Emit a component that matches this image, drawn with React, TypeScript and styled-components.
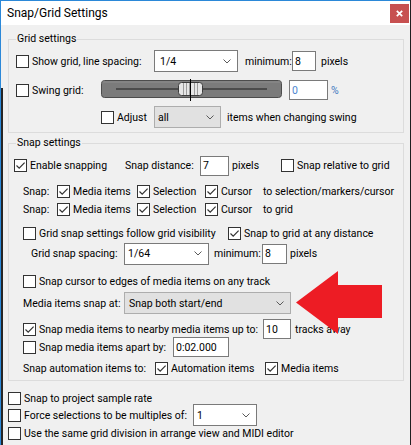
import React from "react";
import styled, { createGlobalStyle } from "styled-components";

const GlobalStyle = createGlobalStyle`
  html, body {
    margin: 0;
    padding: 0;
    background: #1f1f1f;
  }
  body {
    font-family: Roboto, "Liberation Sans", Arial, sans-serif;
    font-size: 10.5px;
    color: #000;
  }
`;

const Window = styled.div`
  position: relative;
  width: 409px;
  height: 444px;
  border-top: 1px solid #2b88d8;
  border-left: 1px solid #2b88d8;
  background: #f0f0f0;
  overflow: hidden;
`;

const EdgeShadow = styled.div`
  position: absolute;
  left: -1px;
  top: 87px;
  bottom: 0;
  width: 3px;
  background: #262626;
`;

const TitleBar = styled.div`
  display: flex;
  align-items: center;
  justify-content: space-between;
  height: 24px;
  padding-left: 6px;
  background: #fff;
  font-size: 12px;
`;

const CloseButton = styled.div`
  display: grid;
  place-items: center;
  width: 19px;
  height: 19px;
  margin-right: 1px;
  background: #c75050;
`;

const Content = styled.div`
  padding-left: 7px;
`;

const Group = styled.div<{ $mt: number; $pt: number; $pb: number }>`
  position: relative;
  box-sizing: border-box;
  width: 396px;
  margin-top: ${(p) => p.$mt}px;
  padding: ${(p) => p.$pt}px 0 ${(p) => p.$pb}px;
  border: 1px solid #dcdcdc;
`;

const Legend = styled.span`
  position: absolute;
  top: -8px;
  left: 7px;
  padding: 0 1px;
  line-height: 14px;
  background: #f0f0f0;
`;

const Row = styled.div<{ $h: number; $mt?: number; $pl?: number }>`
  display: flex;
  align-items: center;
  height: ${(p) => p.$h}px;
  margin-top: ${(p) => p.$mt ?? 0}px;
  padding-left: ${(p) => p.$pl ?? 0}px;
  white-space: nowrap;
`;

const Slot = styled.div<{ $w: number }>`
  display: flex;
  align-items: center;
  flex: none;
  width: ${(p) => p.$w}px;
`;

const Text = styled.span<{ $blue?: boolean }>`
  color: ${(p) => (p.$blue ? "#3f78c0" : "#000")};
`;

const CheckLabel = styled.label`
  display: flex;
  align-items: center;
  gap: 3px;
`;

const Box = styled.span`
  display: grid;
  place-items: center;
  flex: none;
  box-sizing: border-box;
  width: 13px;
  height: 13px;
  border: 1px solid #333;
  background: #fff;
`;

const Combo = styled.div<{ $w: number; $grey?: boolean; $pl?: number }>`
  display: flex;
  align-items: center;
  justify-content: space-between;
  flex: none;
  box-sizing: border-box;
  width: ${(p) => p.$w}px;
  height: 22px;
  padding: 0 6px 0 ${(p) => p.$pl ?? 3}px;
  border: 1px solid ${(p) => (p.$grey ? "#adadad" : "#7a7a7a")};
  background: ${(p) => (p.$grey ? "#e1e1e1" : "#fff")};
`;

const Field = styled.div<{ $w: number; $blue?: boolean }>`
  display: flex;
  align-items: center;
  flex: none;
  box-sizing: border-box;
  width: ${(p) => p.$w}px;
  height: 20px;
  padding-left: 2px;
  border: 1px solid #7a7a7a;
  background: #fff;
  color: ${(p) => (p.$blue ? "#4d86cf" : "#000")};
`;

const ArrowMark = styled.svg`
  position: absolute;
  left: 295px;
  top: 270px;
`;

function Check({ label, checked }: { label: string; checked?: boolean }) {
  return (
    <CheckLabel>
      <Box>
        {checked && (
          <svg width="11" height="11" viewBox="0 0 11 11">
            <polyline points="1.5,5.5 4.2,8.2 9.6,2.6" fill="none" stroke="#333" strokeWidth="1.2" />
          </svg>
        )}
      </Box>
      <Text>{label}</Text>
    </CheckLabel>
  );
}

function Chevron() {
  return (
    <svg width="8" height="5" viewBox="0 0 8 5">
      <polyline points="0.5,0.5 4,4 7.5,0.5" fill="none" stroke="#5a5a5a" strokeWidth="1" />
    </svg>
  );
}

function Select({ value, w, grey, pl }: { value: string; w: number; grey?: boolean; pl?: number }) {
  return (
    <Combo $w={w} $grey={grey} $pl={pl}>
      <Text>{value}</Text>
      <Chevron />
    </Combo>
  );
}

function SwingSlider() {
  const stripes = [4, 7, 10, 15, 18];
  return (
    <svg width="181" height="22" viewBox="0 0 181 22">
      <rect x="0.5" y="1.5" width="180" height="17" rx="3" fill="#7b7b7b" stroke="#4c4c4c" />
      <rect x="1.5" y="2.5" width="178" height="1" fill="#8e8e8e" />
      <line x1="15" y1="10" x2="166" y2="10" stroke="#1c1c1c" strokeWidth="1.2" />
      <rect x="77.5" y="3.5" width="24" height="13" rx="3" fill="#e6e6e6" stroke="#3c3c3c" />
      {stripes.map((s) => (
        <rect key={s} x={78 + s} y="4" width="1" height="12" fill="#9c9c9c" />
      ))}
      <line x1="89.5" y1="0" x2="89.5" y2="22" stroke="#000" strokeWidth="1" />
    </svg>
  );
}

export default function App() {
  return (
    <>
      <GlobalStyle />
      <Window>
        <TitleBar>
          <span>Snap/Grid Settings</span>
          <CloseButton>
            <svg width="7" height="7" viewBox="0 0 7 7">
              <path d="M0.8 0.8 L6.2 6.2 M6.2 0.8 L0.8 6.2" stroke="#fff" strokeWidth="1.7" />
            </svg>
          </CloseButton>
        </TitleBar>

        <Content>
          <Group $mt={14} $pt={10} $pb={4}>
            <Legend>Grid settings</Legend>
            <Row $h={22} $pl={7}>
              <Slot $w={138}>
                <Check label="Show grid, line spacing:" />
              </Slot>
              <Slot $w={91}>
                <Select value="1/4" w={84} pl={5} />
              </Slot>
              <Slot $w={47}>
                <Text>minimum:</Text>
              </Slot>
              <Slot $w={29}>
                <Field $w={24}>8</Field>
              </Slot>
              <Text>pixels</Text>
            </Row>
            <Row $h={22} $mt={7} $pl={7}>
              <Slot $w={85}>
                <Check label="Swing grid:" />
              </Slot>
              <Slot $w={188}>
                <SwingSlider />
              </Slot>
              <Slot $w={42}>
                <Field $w={39} $blue>
                  0
                </Field>
              </Slot>
              <Text $blue>%</Text>
            </Row>
            <Row $h={22} $mt={5} $pl={92}>
              <Slot $w={53}>
                <Check label="Adjust" />
              </Slot>
              <Slot $w={73}>
                <Select value="all" w={67} grey />
              </Slot>
              <Text>items when changing swing</Text>
            </Row>
          </Group>

          <Group $mt={10} $pt={11} $pb={3}>
            <Legend>Snap settings</Legend>
            <Row $h={21} $pl={5}>
              <Slot $w={111}>
                <Check label="Enable snapping" checked />
              </Slot>
              <Slot $w={75}>
                <Text>Snap distance:</Text>
              </Slot>
              <Slot $w={32}>
                <Field $w={29}>7</Field>
              </Slot>
              <Slot $w={49}>
                <Text>pixels</Text>
              </Slot>
              <Check label="Snap relative to grid" />
            </Row>
            {["to selection/markers/cursor", "to grid"].map((target, i) => (
              <Row key={target} $h={18} $mt={i === 0 ? 6 : 0} $pl={14}>
                <Slot $w={34}>
                  <Text>Snap:</Text>
                </Slot>
                <Slot $w={80}>
                  <Check label="Media items" checked />
                </Slot>
                <Slot $w={68}>
                  <Check label="Selection" checked />
                </Slot>
                <Slot $w={58}>
                  <Check label="Cursor" checked />
                </Slot>
                <Text>{target}</Text>
              </Row>
            ))}
            <Row $h={18} $mt={6} $pl={14}>
              <Slot $w={205}>
                <Check label="Grid snap settings follow grid visibility" />
              </Slot>
              <Check label="Snap to grid at any distance" checked />
            </Row>
            <Row $h={21} $mt={1} $pl={22}>
              <Slot $w={93}>
                <Text>Grid snap spacing:</Text>
              </Slot>
              <Slot $w={90}>
                <Select value="1/64" w={85} />
              </Slot>
              <Slot $w={48}>
                <Text>minimum:</Text>
              </Slot>
              <Slot $w={28}>
                <Field $w={25}>8</Field>
              </Slot>
              <Text>pixels</Text>
            </Row>
            <Row $h={18} $mt={8} $pl={14}>
              <Check label="Snap cursor to edges of media items on any track" />
            </Row>
            <Row $h={22} $mt={2} $pl={14}>
              <Slot $w={101}>
                <Text>Media items snap at:</Text>
              </Slot>
              <Select value="Snap both start/end" w={167} grey pl={4} />
            </Row>
            <Row $h={18} $mt={6} $pl={14}>
              <Slot $w={240}>
                <Check label="Snap media items to nearby media items up to:" checked />
              </Slot>
              <Slot $w={32}>
                <Field $w={28}>10</Field>
              </Slot>
              <Text>tracks away</Text>
            </Row>
            <Row $h={18} $pl={14}>
              <Slot $w={150}>
                <Check label="Snap media items apart by:" />
              </Slot>
              <Field $w={56}>0:02.000</Field>
            </Row>
            <Row $h={18} $mt={3} $pl={14}>
              <Slot $w={132}>
                <Text>Snap automation items to:</Text>
              </Slot>
              <Slot $w={110}>
                <Check label="Automation items" checked />
              </Slot>
              <Check label="Media items" checked />
            </Row>
          </Group>

          <Row $h={16} $mt={9}>
            <Check label="Snap to project sample rate" />
          </Row>
          <Row $h={18}>
            <Slot $w={185}>
              <Check label="Force selections to be multiples of:" />
            </Slot>
            <Select value="1" w={64} />
          </Row>
          <Row $h={18}>
            <Check label="Use the same grid division in arrange view and MIDI editor" />
          </Row>
        </Content>

        <ArrowMark width="87" height="63" viewBox="0 0 87 63">
          <polygon points="0,31.5 42,0 42,14 86,14 86,47 42,47 42,63" fill="#ed1c24" />
        </ArrowMark>
        <EdgeShadow />
      </Window>
    </>
  );
}
